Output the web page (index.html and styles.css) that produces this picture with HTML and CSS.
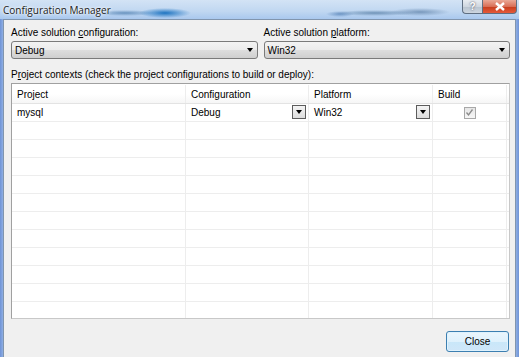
FILE: index.html
```html
<!DOCTYPE html>
<html lang="en">
<head>
    <meta charset="UTF-8">
    <title>Configuration Manager</title>
    <link rel="stylesheet" href="styles.css">
</head>
<body>

<div class="window">
    <div class="titlebar">
        <span class="title">Configuration Manager</span>
        <div class="caption-buttons">
            <span class="cap-btn help">?</span>
            <span class="cap-btn close-x">
                <svg width="12" height="9" viewBox="0 0 12 9"><path d="M2 1 L10 8 M10 1 L2 8" stroke="#fff" stroke-width="2.4"/></svg>
            </span>
        </div>
    </div>

    <div class="client">
        <div class="top-row">
            <div class="field">
                <label>Active solution <u>c</u>onfiguration:</label>
                <div class="combo"><span>Debug</span><span class="arrow"></span></div>
            </div>
            <div class="field">
                <label>Active solution <u>p</u>latform:</label>
                <div class="combo"><span>Win32</span><span class="arrow"></span></div>
            </div>
        </div>

        <label class="contexts-label">P<u>r</u>oject contexts (check the project configurations to build or deploy):</label>

        <div class="grid">
            <div class="row head">
                <div class="cell c-project">Project</div>
                <div class="cell c-config">Configuration</div>
                <div class="cell c-platform">Platform</div>
                <div class="cell c-build">Build</div>
            </div>
            <div class="row">
                <div class="cell c-project">mysql</div>
                <div class="cell c-config">Debug<span class="drop"><span class="arrow"></span></span></div>
                <div class="cell c-platform">Win32<span class="drop"><span class="arrow"></span></span></div>
                <div class="cell c-build centered">
                    <span class="check">
                        <svg width="9" height="9" viewBox="0 0 9 9"><path d="M1.5 4.5 L3.5 7 L7.5 1.5" fill="none" stroke="#8a8a8a" stroke-width="1.3"/></svg>
                    </span>
                </div>
            </div>
            <div class="row"><div class="cell c-project"></div><div class="cell c-config"></div><div class="cell c-platform"></div><div class="cell c-build"></div></div>
            <div class="row"><div class="cell c-project"></div><div class="cell c-config"></div><div class="cell c-platform"></div><div class="cell c-build"></div></div>
            <div class="row"><div class="cell c-project"></div><div class="cell c-config"></div><div class="cell c-platform"></div><div class="cell c-build"></div></div>
            <div class="row"><div class="cell c-project"></div><div class="cell c-config"></div><div class="cell c-platform"></div><div class="cell c-build"></div></div>
            <div class="row"><div class="cell c-project"></div><div class="cell c-config"></div><div class="cell c-platform"></div><div class="cell c-build"></div></div>
            <div class="row"><div class="cell c-project"></div><div class="cell c-config"></div><div class="cell c-platform"></div><div class="cell c-build"></div></div>
            <div class="row"><div class="cell c-project"></div><div class="cell c-config"></div><div class="cell c-platform"></div><div class="cell c-build"></div></div>
            <div class="row"><div class="cell c-project"></div><div class="cell c-config"></div><div class="cell c-platform"></div><div class="cell c-build"></div></div>
            <div class="row"><div class="cell c-project"></div><div class="cell c-config"></div><div class="cell c-platform"></div><div class="cell c-build"></div></div>
            <div class="row"><div class="cell c-project"></div><div class="cell c-config"></div><div class="cell c-platform"></div><div class="cell c-build"></div></div>
            <div class="row"><div class="cell c-project"></div><div class="cell c-config"></div><div class="cell c-platform"></div><div class="cell c-build"></div></div>
        </div>

        <div class="footer">
            <button type="button" class="btn-close">Close</button>
        </div>
    </div>
</div>

</body>
</html>
```

FILE: styles.css
```css
body {
    margin: 0;
    font-family: "Liberation Sans", Arial, sans-serif;
    font-size: 10px;
    color: #000;
}
.window {
    width: 519px;
    height: 357px;
    display: flex;
    flex-direction: column;
    overflow: hidden;
    background: linear-gradient(90deg, #6f93d6 0, #8eaee4 3px, #b8cde8 6px, #b8cde8 513px, #8eaee4 516px, #6f93d6 519px);
}
.titlebar {
    height: 19px;
    display: flex;
    align-items: flex-start;
    background:
        radial-gradient(ellipse 26px 5px at 165px 13px, rgba(20, 110, 190, 0.95), transparent),
        radial-gradient(ellipse 30px 3px at 125px 13px, rgba(70, 120, 170, 0.7), transparent),
        radial-gradient(ellipse 40px 3px at 375px 13px, rgba(80, 120, 160, 0.7), transparent),
        radial-gradient(ellipse 30px 4px at 420px 12px, rgba(90, 125, 165, 0.7), transparent),
        radial-gradient(ellipse 14px 3px at 340px 14px, rgba(60, 110, 170, 0.6), transparent),
        linear-gradient(180deg, #d3e3f5 0, #c0d7f1 60%, #a9c8ee 100%);
}
.title {
    padding: 3px 0 0 3px;
    font-family: "Open Sans", sans-serif;
    font-size: 10px;
    line-height: 14px;
    color: #1a1a1a;
    text-shadow: 0 0 4px #fff, 0 0 2px #fff;
}
.caption-buttons {
    display: flex;
    margin-left: auto;
    margin-right: 2px;
}
.cap-btn {
    height: 13px;
    display: flex;
    align-items: center;
    justify-content: center;
    border: 1px solid #5f6f82;
    border-top: 0;
}
.help {
    width: 19px;
    border-radius: 0 0 0 4px;
    border-right: 0;
    background: linear-gradient(180deg, #e8ecf1 0, #cfd7e0 50%, #b8c3cf 51%, #cdd6e0 100%);
    color: #fff;
    font-weight: bold;
    font-size: 10px;
    text-shadow: 0 0 2px #334;
}
.close-x {
    width: 33px;
    border-radius: 0 0 4px 0;
    background: linear-gradient(180deg, #eaa896 0, #d96f57 50%, #c53c1c 51%, #e65a3a 100%);
}
.client {
    flex: 1;
    margin: 0 3px;
    border: 1px solid #8195ad;
    border-bottom: 0;
    background: #f0f0f0;
    padding: 6px 5px 0 7px;
    display: flex;
    flex-direction: column;
}
.top-row {
    display: flex;
    gap: 6px;
}
.field {
    flex: 1;
}
label {
    display: block;
    line-height: 14px;
    white-space: nowrap;
}
.combo {
    margin-top: 1px;
    height: 16px;
    border: 1px solid #7a7a7a;
    border-radius: 3px;
    background: linear-gradient(180deg, #f3f3f3 0, #ebebeb 50%, #dddddd 51%, #cfcfcf 100%);
    display: flex;
    align-items: center;
    padding: 0 4px 0 3px;
}
.combo span:first-child {
    flex: 1;
}
.arrow {
    width: 0;
    height: 0;
    border-left: 3px solid transparent;
    border-right: 3px solid transparent;
    border-top: 4px solid #000;
}
.contexts-label {
    margin-top: 9px;
}
.grid {
    margin-top: 1px;
    height: 234px;
    border: 1px solid #a0a0a0;
    border-right-color: #c8c8c8;
    border-bottom-color: #c8c8c8;
    background: #fff;
    overflow: hidden;
}
.row {
    display: flex;
    height: 17px;
    border-bottom: 1px solid #ededed;
}
.row.head {
    height: 18px;
    margin-top: 1px;
    background: linear-gradient(180deg, #fff 0, #fff 50%, #f6f6f6 100%);
    border-bottom-color: #e3e3e3;
}
.cell {
    display: flex;
    align-items: center;
    padding-left: 5px;
    border-right: 1px solid #ededed;
    box-sizing: border-box;
    position: relative;
}
.c-project { width: 174px; }
.c-config { width: 123px; }
.c-platform { width: 124px; }
.c-build { width: 74px; }
.centered { justify-content: center; padding-left: 0; }
.drop {
    position: absolute;
    right: 2px;
    top: 1px;
    width: 12px;
    height: 12px;
    border: 1px solid #5c5c5c;
    background: linear-gradient(180deg, #f4f4f4 0, #dcdcdc 100%);
    display: flex;
    align-items: center;
    justify-content: center;
}
.check {
    width: 10px;
    height: 10px;
    border: 1px solid #a8a8a8;
    background: linear-gradient(180deg, #e6e6e6, #f6f6f6);
    display: flex;
    align-items: center;
    justify-content: center;
}
.footer {
    display: flex;
    justify-content: flex-end;
    padding: 12px 1px 0 0;
}
.btn-close {
    width: 63px;
    height: 21px;
    font-family: inherit;
    font-size: 10px;
    border: 1px solid #3c7fb1;
    border-radius: 3px;
    box-shadow: inset 0 0 0 1px #dff2fd;
    background: linear-gradient(180deg, #eaf6fd 0, #dff1fc 50%, #c9e7f9 51%, #cfe6f8 100%);
    padding: 0;
}
```
